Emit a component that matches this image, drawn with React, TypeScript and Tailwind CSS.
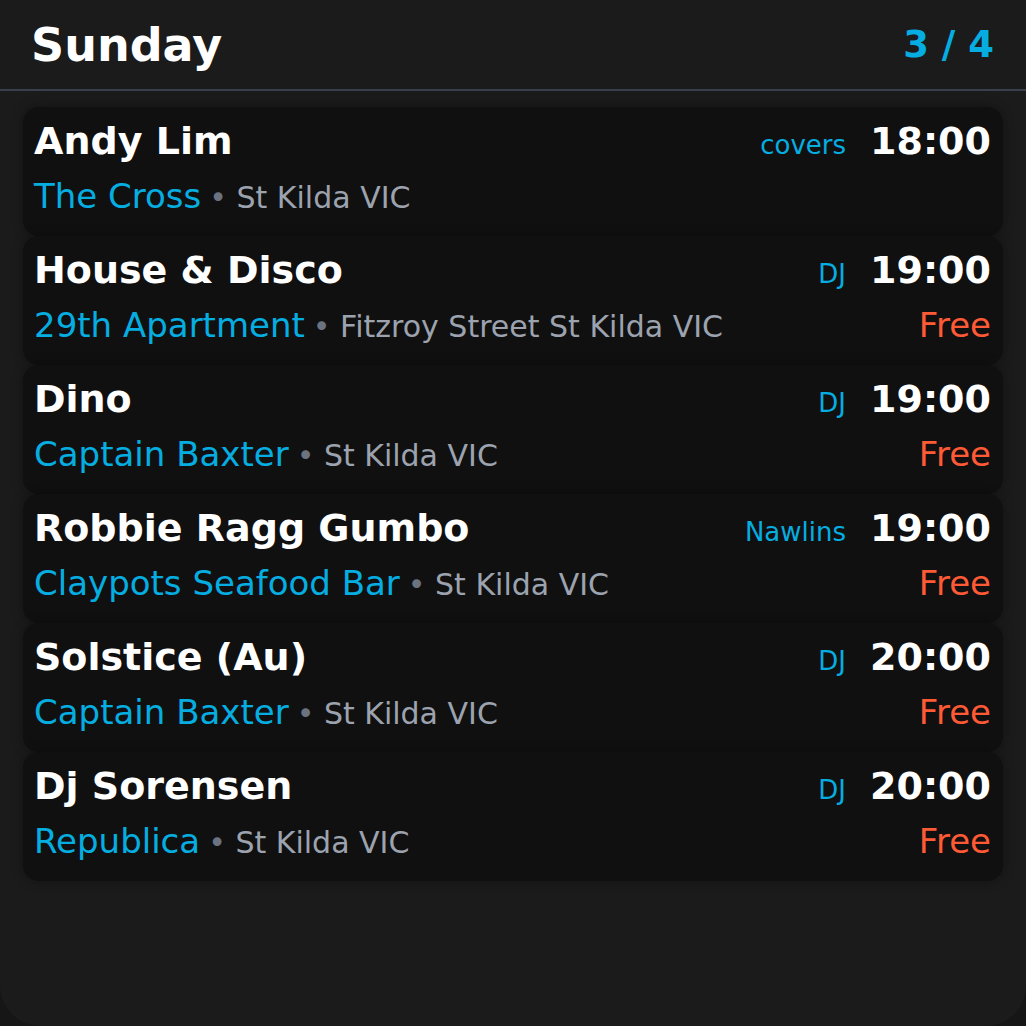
const events = [
  { title: "Andy Lim", venue: "The Cross", place: "St Kilda VIC", tag: "covers", time: "18:00", price: "" },
  { title: "House & Disco", venue: "29th Apartment", place: "Fitzroy Street St Kilda VIC", tag: "DJ", time: "19:00", price: "Free" },
  { title: "Dino", venue: "Captain Baxter", place: "St Kilda VIC", tag: "DJ", time: "19:00", price: "Free" },
  { title: "Robbie Ragg Gumbo", venue: "Claypots Seafood Bar", place: "St Kilda VIC", tag: "Nawlins", time: "19:00", price: "Free" },
  { title: "Solstice (Au)", venue: "Captain Baxter", place: "St Kilda VIC", tag: "DJ", time: "20:00", price: "Free" },
  { title: "Dj Sorensen", venue: "Republica", place: "St Kilda VIC", tag: "DJ", time: "20:00", price: "Free" },
];

function EventCard({ ev }: { ev: (typeof events)[number] }) {
  return (
    <div className="h-[129px] rounded-[16px] bg-[#101010] pl-[11px] pr-[12px] pt-[11px] shadow-[0_0_12px_rgba(0,0,0,0.35)]">
      <div className="flex items-baseline justify-between h-[46px] leading-[46px]">
        <span className="text-[38px] font-bold text-white">{ev.title}</span>
        <div className="flex items-baseline gap-[24px]">
          <span className="text-[26px] text-[#06ade0]">{ev.tag}</span>
          <span className="text-[38px] font-bold text-white">{ev.time}</span>
        </div>
      </div>
      <div className="mt-[12px] flex items-baseline justify-between h-[40px] leading-[40px]">
        <div className="flex items-baseline">
          <span className="text-[34px] text-[#06ade0]">{ev.venue}</span>
          <span className="ml-[8px] text-[30px] text-[#9ca3af]">
            <span className="text-[#6b7280]">•</span> {ev.place}
          </span>
        </div>
        <span className="text-[34px] text-[#ff5a36]">{ev.price}</span>
      </div>
    </div>
  );
}

export default function App() {
  return (
    <div className="h-[1026px] w-[1026px] bg-[#161616] font-['DejaVu_Sans',sans-serif]">
      <div className="h-full rounded-b-[40px] bg-[#1b1b1b]">
        <header className="flex h-[91px] items-center justify-between border-b-2 border-[#3a404b] pl-[31px] pr-[32px]">
          <h1 className="text-[46px] font-bold text-white leading-none">Sunday</h1>
          <span className="text-[37px] font-bold text-[#06ade0] leading-none">3 / 4</span>
        </header>
        <div className="flex flex-col px-[23px] pt-[16px]">
          {events.map((ev) => (
            <EventCard key={ev.title} ev={ev} />
          ))}
        </div>
      </div>
    </div>
  );
}
